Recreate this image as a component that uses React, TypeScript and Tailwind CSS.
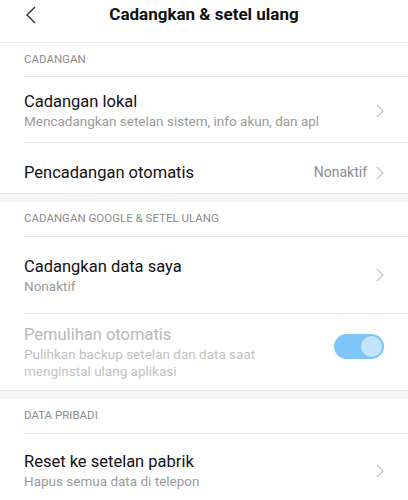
import React from 'react';

function Chevron() {
  return (
    <svg width="8" height="14" viewBox="0 0 8 14" className="shrink-0">
      <path d="M1 1 L7 7 L1 13" fill="none" stroke="#c4c4c4" strokeWidth="1.2" />
    </svg>
  );
}

function Row({
  title,
  sub,
  value,
  height,
  disabled,
  right,
  last,
}: {
  title: string;
  sub?: string[];
  value?: string;
  height: string;
  disabled?: boolean;
  right?: React.ReactNode;
  last?: boolean;
}) {
  return (
    <div className="pl-6">
      <div className={`${height} flex items-center pr-6 ${last ? '' : 'border-b border-[#e8e8e8]'}`}>
        <div className="flex-1 flex flex-col">
          <span className={`text-[16.5px] leading-[22px] ${disabled ? 'text-[#b8b8b8]' : 'text-[#111]'}`}>{title}</span>
          {sub &&
            sub.map((s) => (
              <span key={s} className={`text-[13.5px] leading-[17px] ${disabled ? 'text-[#c2c2c2]' : 'text-[#9a9a9a]'}`}>
                {s}
              </span>
            ))}
        </div>
        {value && <span className="text-[14px] text-[#8c8c8c] mr-[9px]">{value}</span>}
        {right ?? <Chevron />}
      </div>
    </div>
  );
}

function Band() {
  return <div className="h-[9px] bg-[#f5f5f5] border-t border-[#e6e6e6]" />;
}

export default function App() {
  return (
    <div className="w-[408px] h-[500px] bg-white overflow-hidden" style={{ fontFamily: 'Roboto, "Noto Sans", sans-serif' }}>
      <div className="h-[43px] flex items-center relative border-b border-[#eeeeee]">
        <svg width="12" height="18" viewBox="0 0 12 18" className="absolute left-[25px] top-[6px]">
          <path d="M10 1 L2 9 L10 17" fill="none" stroke="#333" strokeWidth="1.4" />
        </svg>
        <div className="flex-1 text-center text-[17px] font-bold text-[#111] -mt-[12px]">Cadangkan &amp; setel ulang</div>
      </div>

      <div className="pl-6">
        <div className="h-[34px] flex items-center text-[11.5px] text-[#8c8c8c] border-b border-[#e8e8e8]">CADANGAN</div>
      </div>
      <Row title="Cadangan lokal" sub={['Mencadangkan setelan sistem, info akun, dan apl']} height="h-[66px] pt-[2px]" />
      <Row title="Pencadangan otomatis" value="Nonaktif" height="h-[50px] pt-[9px]" last />
      <Band />

      <div className="pl-6">
        <div className="h-[35px] flex items-center text-[11.5px] text-[#8c8c8c] border-b border-[#e8e8e8]">CADANGAN GOOGLE &amp; SETEL ULANG</div>
      </div>
      <Row title="Cadangkan data saya" sub={['Nonaktif']} height="h-[77px]" />
      <Row
        title="Pemulihan otomatis"
        sub={['Pulihkan backup setelan dan data saat', 'menginstal ulang aplikasi']}
        height="h-[76px]"
        disabled
        last
        right={
          <div className="w-[50px] h-[25px] rounded-full bg-[#7ec6f9] flex items-center justify-end pr-[2px] -mt-[12px]">
            <div className="w-[21px] h-[21px] rounded-full bg-[#c2e4fc]" />
          </div>
        }
      />
      <Band />

      <div className="pl-6">
        <div className="h-[35px] flex items-center text-[11.5px] text-[#8c8c8c] border-b border-[#e8e8e8]">DATA PRIBADI</div>
      </div>
      <Row title="Reset ke setelan pabrik" sub={['Hapus semua data di telepon']} height="h-[66px] pt-[7px]" last />
    </div>
  );
}
